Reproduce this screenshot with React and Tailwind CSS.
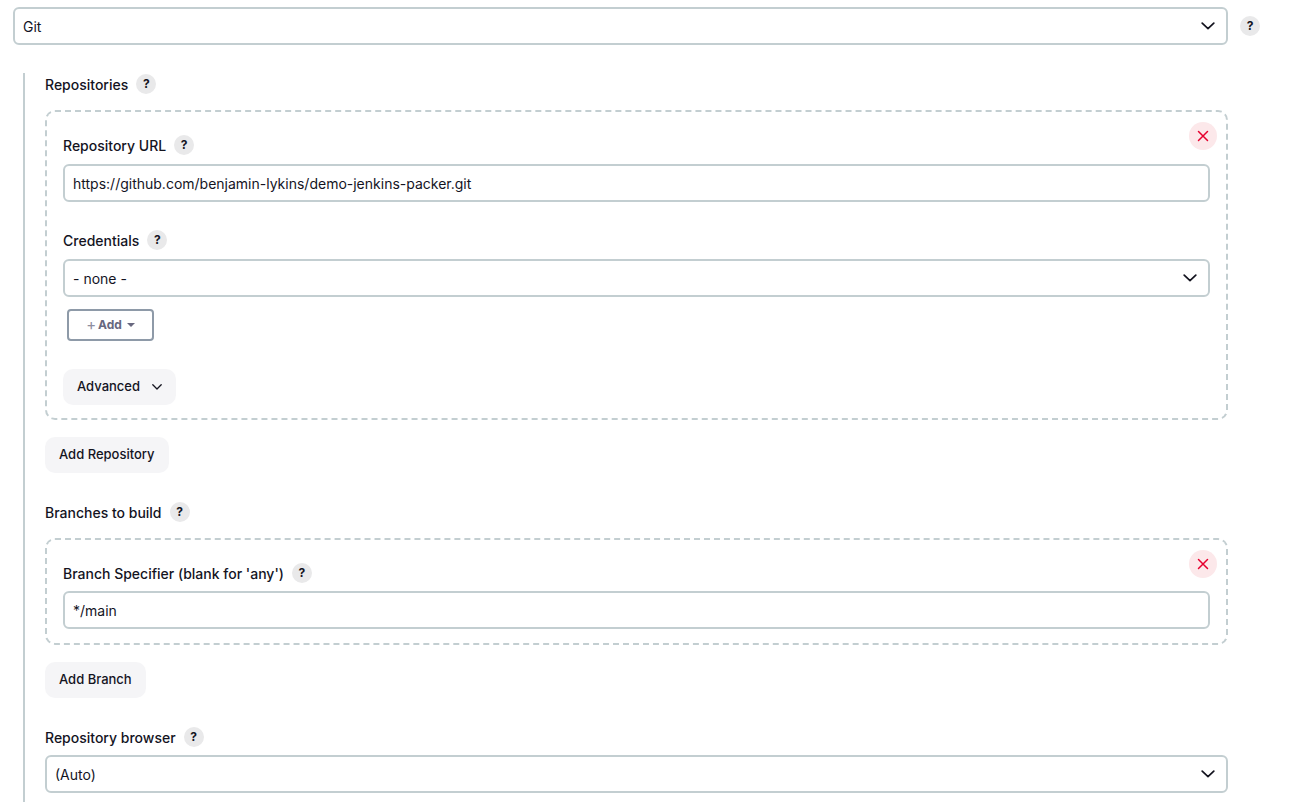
import React from "react";

function Help() {
    return (
        <span className="flex items-center justify-center w-5 h-5 rounded-full bg-[#e9e9ea] text-[12px] font-bold text-[#14141f] shrink-0">
            ?
        </span>
    );
}

function Label({ text }) {
    return (
        <div className="flex items-center gap-2 h-[22px] text-[14px] font-medium text-[#14141f]">
            <span>{text}</span>
            <Help />
        </div>
    );
}

function Chevron() {
    return (
        <svg width="14" height="8" viewBox="0 0 14 8" fill="none" stroke="#14141f" strokeWidth="1.7" strokeLinecap="round" strokeLinejoin="round">
            <path d="M1.2 1.2 7 6.6l5.8-5.4" />
        </svg>
    );
}

function Select({ value }) {
    return (
        <div className="flex items-center justify-between h-[38px] pl-[8px] pr-[11px] bg-white border-2 border-[#c3ced1] rounded-[6px] text-[14px] text-[#14141f]">
            <span>{value}</span>
            <Chevron />
        </div>
    );
}

function Input({ value }) {
    return (
        <div className="flex items-center h-[38px] px-[8px] bg-white border-2 border-[#c3ced1] rounded-[6px] text-[14px] text-[#14141f]">
            {value}
        </div>
    );
}

function Btn({ children }) {
    return (
        <div className="inline-flex items-center h-9 px-[14px] rounded-[10px] bg-[#f5f5f7] text-[13px] font-medium text-[#14141f]">
            {children}
        </div>
    );
}

function Close() {
    return (
        <div className="absolute top-[10px] right-[9px] flex items-center justify-center w-7 h-7 rounded-full bg-[#fce8ea]">
            <svg width="12" height="12" viewBox="0 0 12 12" fill="none" stroke="#e6002e" strokeWidth="1.5" strokeLinecap="round">
                <path d="M1.5 1.5l9 9M10.5 1.5l-9 9" />
            </svg>
        </div>
    );
}

export default function App() {
    return (
        <div className="w-[1298px] h-[802px] overflow-hidden bg-white font-['Inter',sans-serif]">
            <div className="flex items-center gap-3 ml-[13px] mt-[7px] w-[1247px]">
                <div className="w-[1215px]">
                    <Select value="Git" />
                </div>
                <Help />
            </div>

            <div className="ml-[23px] mt-[28px] w-[1205px] h-[729px] pl-[20px] border-l-2 border-[#c3ced1]">
                <Label text="Repositories" />

                <div className="relative mt-[15px] h-[310px] px-4 pt-[22px] border-2 border-dashed border-[#c3ced1] rounded-[10px]">
                    <Close />
                    <Label text="Repository URL" />
                    <div className="mt-[8px]">
                        <Input value="https://github.com/benjamin-lykins/demo-jenkins-packer.git" />
                    </div>
                    <div className="mt-[27px]">
                        <Label text="Credentials" />
                    </div>
                    <div className="mt-[8px]">
                        <Select value="- none -" />
                    </div>
                    <div className="mt-[12px] ml-[4px] flex items-center justify-center w-[87px] h-[32px] gap-[2px] border-2 border-[#8e9aa8] rounded-[4px] text-[12px] font-bold text-[#68687f]">
                        <span className="font-normal text-[15px] text-[#8e8ea0]">+</span>
                        <span>Add</span>
                        <svg width="8" height="4" viewBox="0 0 8 4" className="ml-[3px]" fill="#68687f">
                            <path d="M0 0h8L4 4z" />
                        </svg>
                    </div>
                    <div className="mt-[28px]">
                        <Btn>
                            Advanced
                            <svg width="10" height="6" viewBox="0 0 10 6" className="ml-[12px]" fill="none" stroke="#14141f" strokeWidth="1.3" strokeLinecap="round" strokeLinejoin="round">
                                <path d="M.8.8 5 5 9.2.8" />
                            </svg>
                        </Btn>
                    </div>
                </div>

                <div className="mt-[17px]">
                    <Btn>Add Repository</Btn>
                </div>

                <div className="mt-[28px]">
                    <Label text="Branches to build" />
                </div>

                <div className="relative mt-[15px] h-[107px] px-4 pt-[22px] border-2 border-dashed border-[#c3ced1] rounded-[10px]">
                    <Close />
                    <Label text="Branch Specifier (blank for 'any')" />
                    <div className="mt-[7px]">
                        <Input value="*/main" />
                    </div>
                </div>

                <div className="mt-[17px]">
                    <Btn>Add Branch</Btn>
                </div>

                <div className="mt-[28px]">
                    <Label text="Repository browser" />
                </div>
                <div className="mt-[7px]">
                    <Select value="(Auto)" />
                </div>
            </div>
        </div>
    );
}
